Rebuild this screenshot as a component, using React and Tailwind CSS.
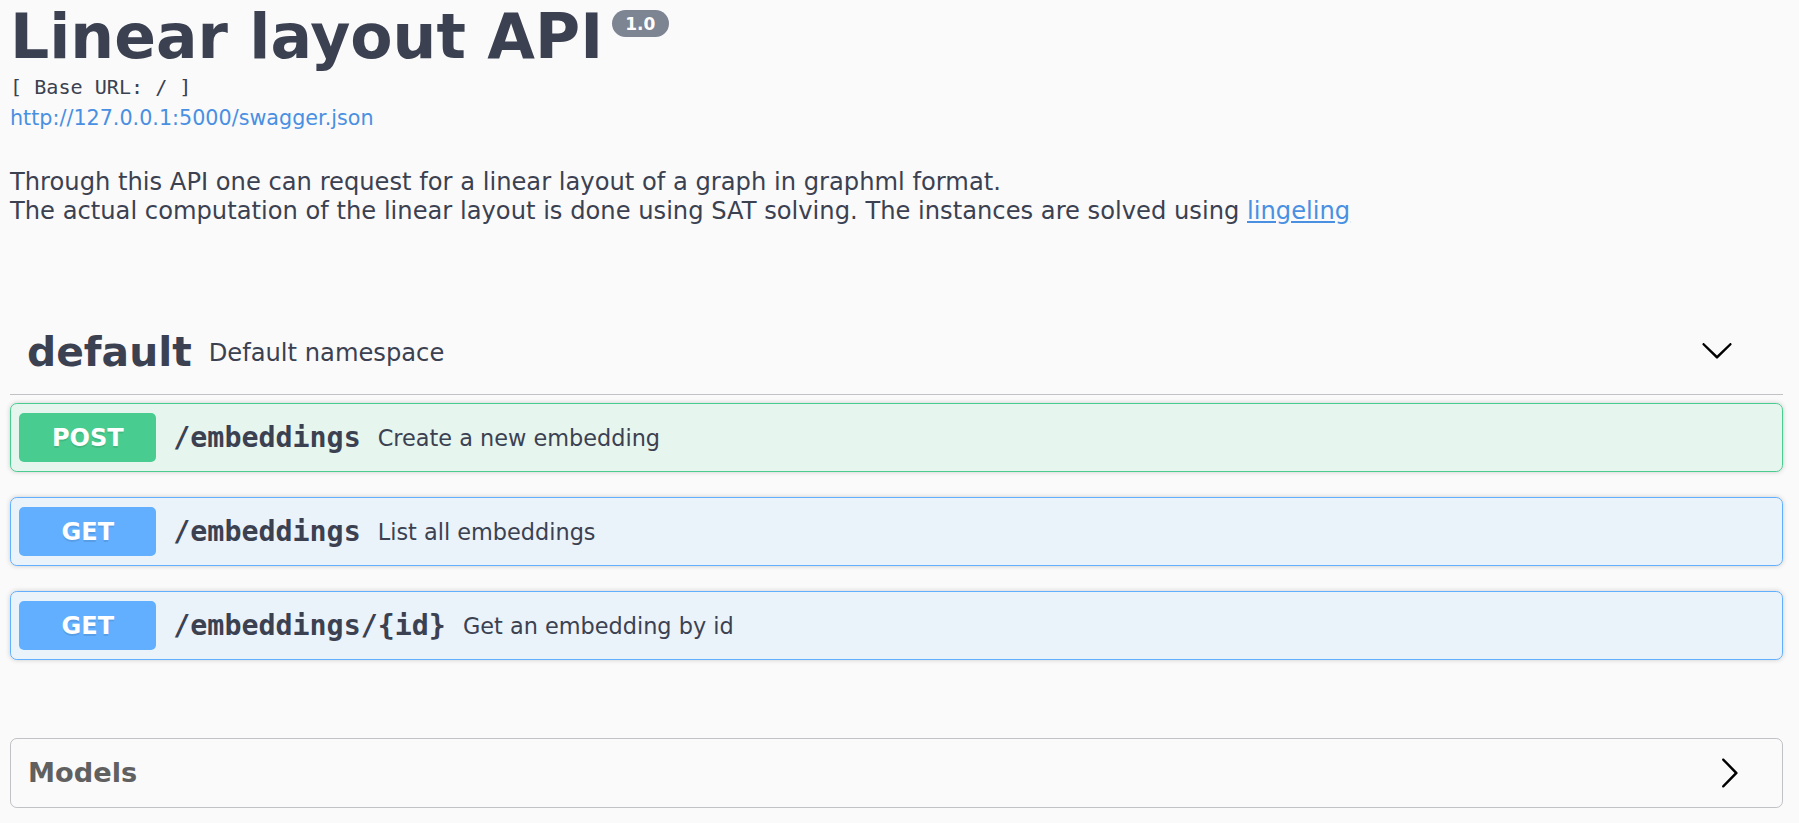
import React from "react";

const DownArrow = () => (
  <svg width="34" height="34" viewBox="0 0 20 20" aria-hidden="true" className="block">
    <path
      fill="#000"
      d="M17.418 6.109c.272-.268.709-.268.979 0s.271.701 0 .969l-7.908 7.83c-.27.268-.707.268-.979 0l-7.908-7.83c-.27-.268-.27-.701 0-.969.271-.268.709-.268.979 0L10 13.25l7.418-7.141z"
    />
  </svg>
);

const RightArrow = () => (
  <svg width="34" height="34" viewBox="0 0 20 20" aria-hidden="true" className="block">
    <path
      fill="#000"
      d="M13.25 10L6.109 2.58c-.268-.27-.268-.707 0-.979.268-.27.701-.27.969 0l7.83 7.908c.268.271.268.709 0 .979l-7.83 7.908c-.268.271-.701.27-.969 0-.268-.269-.268-.707 0-.979L13.25 10z"
    />
  </svg>
);

function Op({ method, path, desc, post }) {
  return (
    <div
      className={
        post
          ? "flex items-center h-[69px] px-[8.3px] rounded-[6.8px] border-[1.7px] border-[#49cc90] bg-[rgba(73,204,144,0.1)] shadow-[0_0_5px_rgba(0,0,0,0.19)]"
          : "flex items-center h-[69px] px-[8.3px] rounded-[6.8px] border-[1.7px] border-[#61affe] bg-[rgba(97,175,254,0.1)] shadow-[0_0_5px_rgba(0,0,0,0.19)]"
      }
    >
      <span
        className={
          post
            ? "flex items-center justify-center w-[137px] h-[49px] rounded-[5px] bg-[#49cc90] text-white font-bold text-[24px] leading-[28px] [text-shadow:0_1.7px_0_rgba(0,0,0,0.1)]"
            : "flex items-center justify-center w-[137px] h-[49px] rounded-[5px] bg-[#61affe] text-white font-bold text-[24px] leading-[28px] [text-shadow:0_1.7px_0_rgba(0,0,0,0.1)]"
        }
      >
        {method}
      </span>
      <span className="px-[17px] font-['DejaVu_Sans_Mono',monospace] font-bold text-[28.3px] leading-[33px] text-[#3b4151]">
        {path}
      </span>
      <span className="text-[22.4px] leading-[26px] text-[#3b4151]">{desc}</span>
    </div>
  );
}

export default function App() {
  return (
    <div className="min-h-screen bg-[#fafafa] pl-[10px] pr-[16px] text-[#3b4151] font-['DejaVu_Sans',sans-serif]">
      <div className="flex items-start h-[76.3px] pt-[2.3px]">
        <h2 className="text-[61.6px] leading-[71px] font-bold m-0">Linear layout API</h2>
        <span className="ml-[8.5px] mt-[8px] inline-flex items-center h-[27px] px-[13.6px] rounded-full bg-[#7d8492] text-white text-[17px] font-bold leading-[20px]">
          1.0
        </span>
      </div>
      <div className="font-['DejaVu_Sans_Mono',monospace] text-[20.1px] leading-[23.7px]">
        [ Base URL: / ]
      </div>
      <div className="text-[27.2px] leading-[31.7px]">
        <a href="#" className="text-[20.7px] leading-[20px] text-[#4990e2]">
          http://127.0.0.1:5000/swagger.json
        </a>
      </div>
      <p className="mt-[36.3px] text-[24.2px] leading-[28.5px]">
        Through this API one can request for a linear layout of a graph in graphml format.
        <br />
        The actual computation of the linear layout is done using SAT solving. The instances are solved using{" "}
        <a href="#" className="text-[#4990e2] underline">
          lingeling
        </a>
      </p>

      <div className="mt-[87px] flex items-center pl-[17px] pr-[34px] py-[17px] border-b-[1.7px] border-[rgba(59,65,81,0.3)]">
        <span className="text-[40.8px] leading-[47.5px] font-bold">default</span>
        <span className="flex-1 px-[17px] text-[24.2px] leading-[28px]">Default namespace</span>
        <span className="mr-[15px] mb-[4.6px]">
          <DownArrow />
        </span>
      </div>

      <div className="mt-[8.5px] flex flex-col gap-[25px]">
        <Op post method="POST" path="/embeddings" desc="Create a new embedding" />
        <Op method="GET" path="/embeddings" desc="List all embeddings" />
        <Op method="GET" path="/embeddings/{id}" desc="Get an embedding by id" />
      </div>

      <div className="mt-[78px] h-[70px] flex items-center border-[1.7px] border-[rgba(59,65,81,0.3)] rounded-[6.8px] pl-[17px] pr-[36px]">
        <span className="flex-1 text-[27.2px] leading-[31.7px] font-bold text-[#606060]">Models</span>
        <RightArrow />
      </div>
    </div>
  );
}
